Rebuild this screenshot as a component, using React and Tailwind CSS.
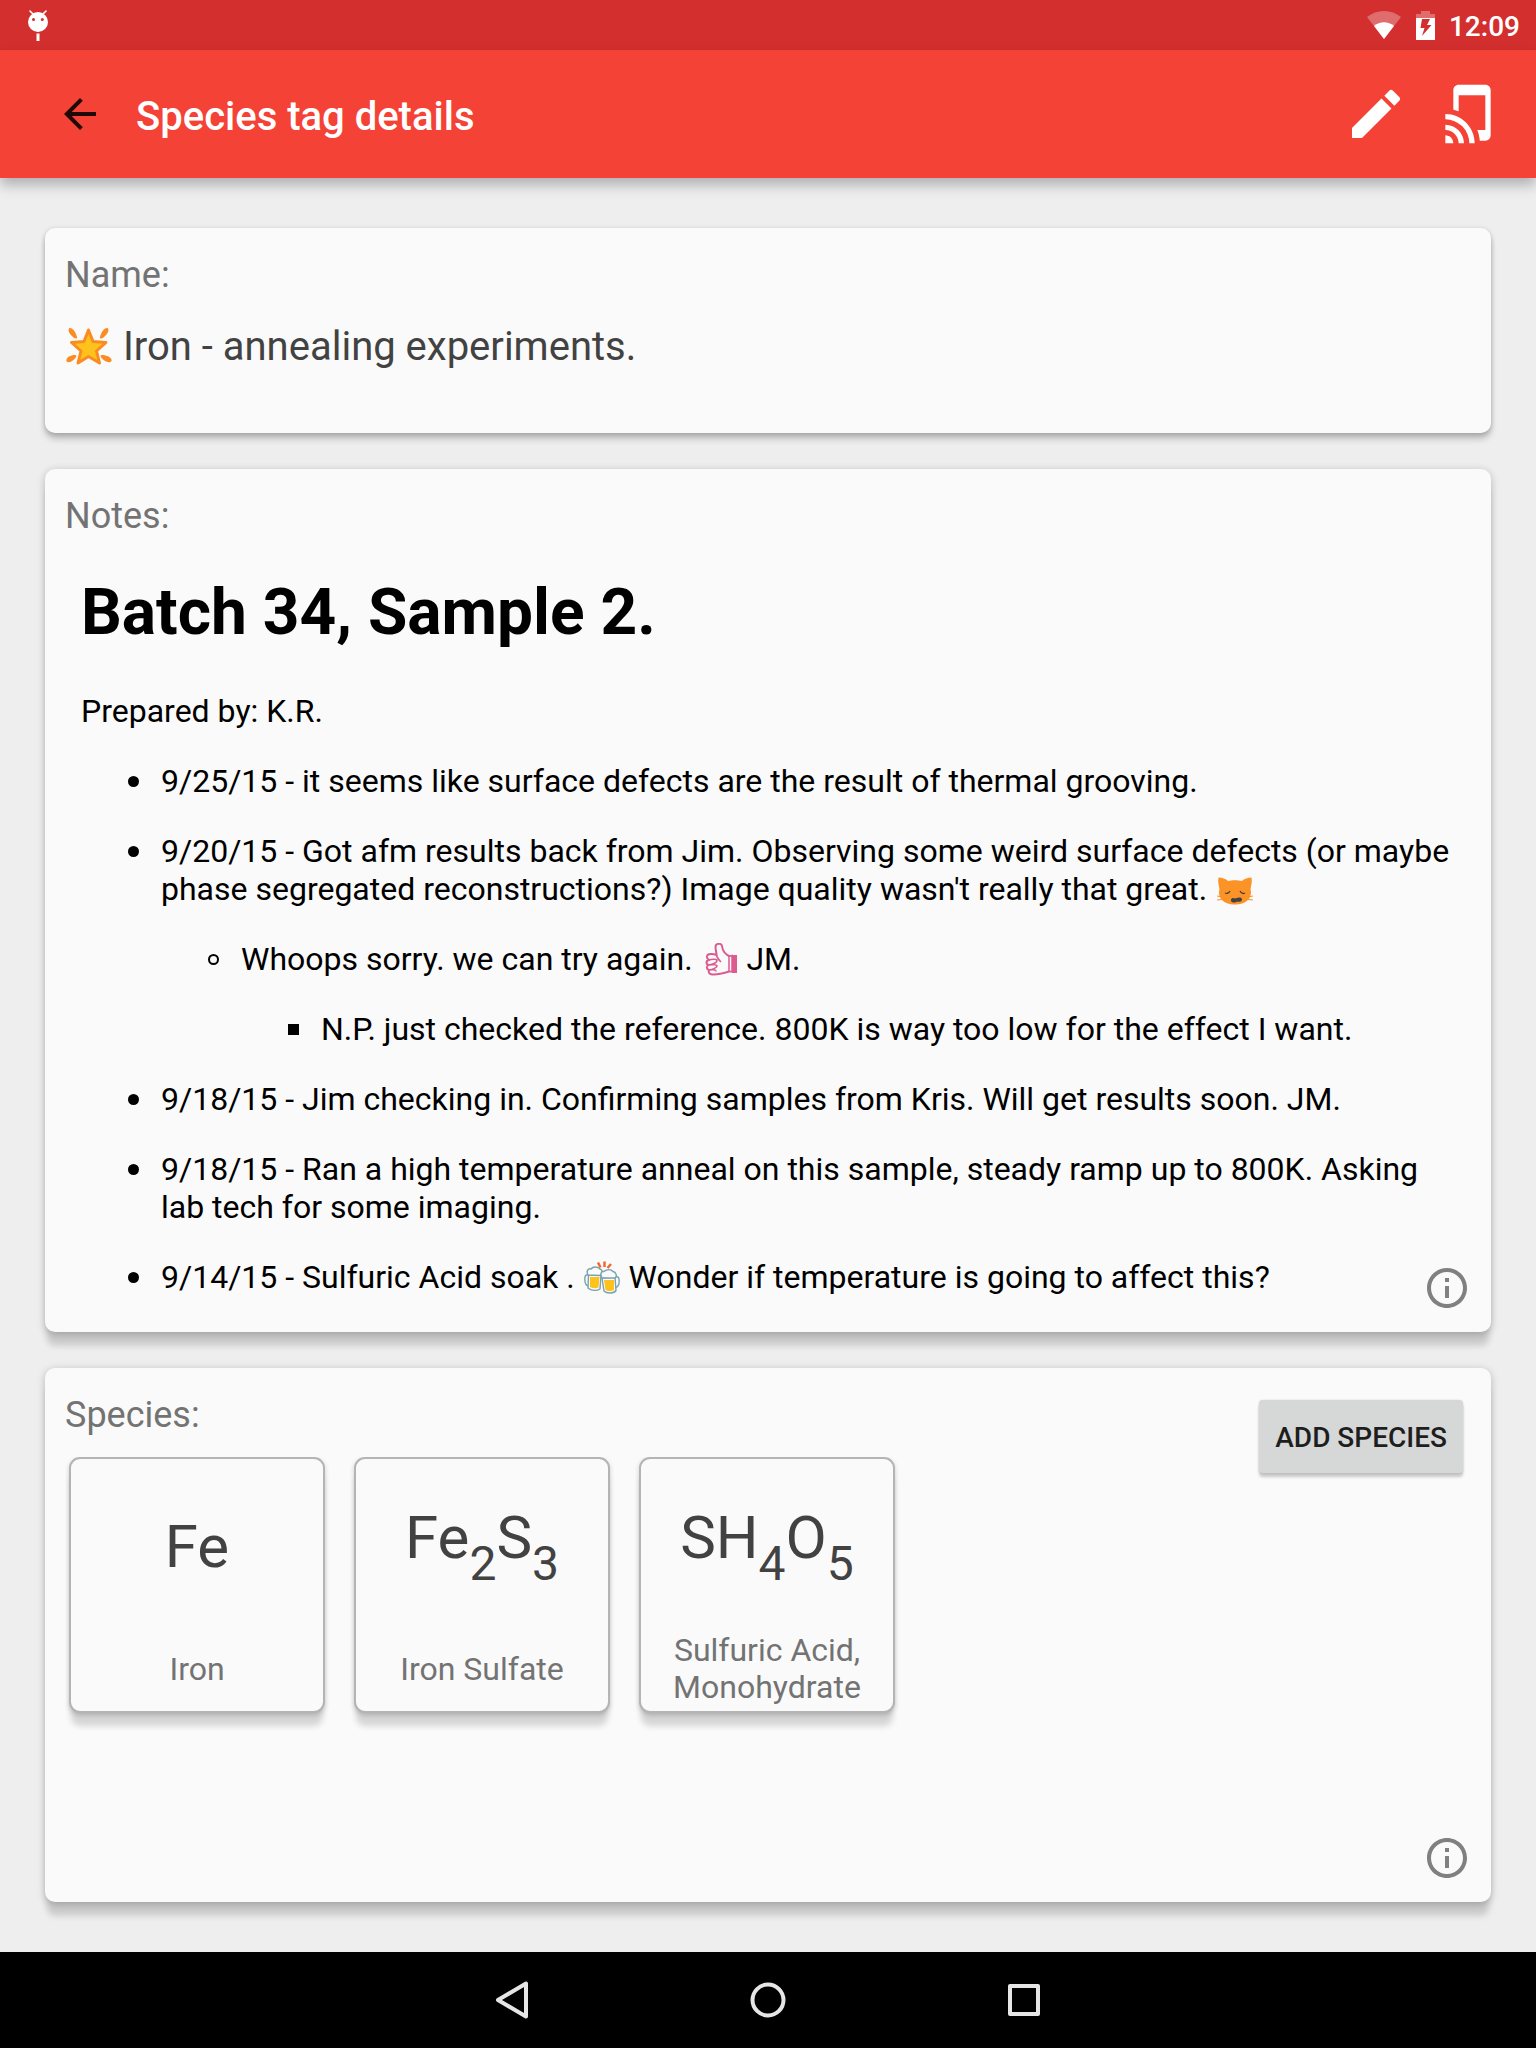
import { MdArrowBack, MdEdit, MdInfoOutline, MdTapAndPlay } from "react-icons/md";

const species = [
  { formula: ["Fe"], name: "Iron" },
  { formula: ["Fe", 2, "S", 3], name: "Iron Sulfate" },
  { formula: ["SH", 4, "O", 5], name: "Sulfuric Acid, Monohydrate" },
];

// bullets hang a bit further left than native list markers
const bullet = "before:inline-block before:size-[11px] before:-ml-[33px] before:mr-[22px] before:align-[5px]";
const disc = `${bullet} before:rounded-full before:bg-black`;
const circle = `${bullet} before:rounded-full before:border-2 before:border-black`;
const square = `${bullet} before:bg-black`;

function StarEmoji() {
  return (
    <svg viewBox="0 0 46 38" className="inline-block w-[46px] h-[38px] ml-px mr-px align-[-5px]" role="img" aria-label="glowing star">
      <g fill="#fb8c23">
        <path d="M3 1.500C5 0 9 3 11 10C11.500 12 9 12 7.500 10.500C4 7.500 1.500 4 3 1.500Z" />
        <path d="M42 1.500C40 0 36 3 34 10C33.500 12 36 12 37.500 10.500C41 7.500 43.500 4 42 1.500Z" />
        <path d="M.5 34C-.5 31 4 28 9 28C11 28 10.500 30 9 31.500C6 34.500 2 37 .5 34Z" />
        <path d="M45.500 34C46.500 31 41 28 36 28C34 28 34.500 30 36 31.500C39 34.500 44 37 45.500 34Z" />
      </g>
      <path d="M22.500 3L27 14.500L40 15.500L30.500 24L33.500 36L22.500 29.500L12 36L15 24L5.500 15.500L18 14.500Z" fill="#fdc21c" stroke="#fb8c23" strokeWidth="3" strokeLinejoin="round" />
    </svg>
  );
}

function CatEmoji() {
  return (
    <svg viewBox="0 0 36 28" className="inline-block w-9 h-7 ml-0.5 align-[-5px]" role="img" aria-label="crying cat">
      <path d="M1.500 .5C5 .5 9 2 11 4C15 3 21 3 25 4C27 2 31 .5 34.500 .5C35.500 5 34 9 33.500 12C36 22 28 27.500 18 27.500S0 22 2.500 12C2 9 .5 5 1.500 .5Z" fill="#fb9327" />
      <path d="M0 19L5 20M0 23L5 22.500M36 19L31 20M36 23L31 22.500" stroke="#fb9327" strokeWidth="1.200" />
      <path d="M8 16C10 17 12 16 13 14M28 16C26 17 24 16 23 14" stroke="#424242" strokeWidth="1.300" fill="none" />
      <path d="M14 22.500C15 20.500 17 21 18.500 21.500C21 20 25 20 25 22.500C25 25 22 25 20 24.500C18 26 13 26 14 22.500Z" fill="#424242" />
    </svg>
  );
}

function ThumbEmoji() {
  return (
    <svg viewBox="0 0 33 33" className="inline-block w-[33px] h-[33px] ml-1 mr-px align-[-6px]" role="img" aria-label="thumbs up">
      <path d="M26 14C21 12 17.500 9 17 3C16.500 0 10.500 0 10.500 4C10.500 7 11.500 9 11.500 12C8 10.500 2.500 10.500 2 13C1.500 15 2.500 16 4 17C1 17.500 .5 21 3.500 22C1 23.500 1.500 26.500 4 27C3 30 5 32 9 31.500C14 31.500 19 30 26 28" fill="#fafafa" stroke="#dc5c92" strokeWidth="2" strokeLinejoin="round" />
      <path d="M4 17C7 16 12 16 12 17.500S9 21 3.500 22C8 21.500 12 21.500 12 23S8 26.500 4 27C8 26.500 11 26.500 11 28.500M11.500 12C12 15 14 17 16 19" fill="none" stroke="#dc5c92" strokeWidth="1.600" />
      <path d="M24 13.500L27 12.500V29L24 28Z" fill="#fafafa" stroke="#dc5c92" strokeWidth="1.500" />
      <path d="M27 12H32V30H27Z" fill="#dc5c92" />
    </svg>
  );
}

function BeersEmoji() {
  return (
    <svg viewBox="0 0 36 33" className="inline-block w-9 h-[33px] mx-px align-[-6px]" role="img" aria-label="clinking beer mugs">
      <path d="M14 1.500L16.500 6.500M20.500 .5V6M27 3L23.500 7" stroke="#f4672f" strokeWidth="2.500" />
      <g fill="#fafafa" stroke="#78a2ae" strokeWidth="1.400" strokeLinejoin="round">
        <path d="M5 14C1.500 13 .8 15 .8 18S1.500 25 5 25M31 16C34.500 15 35.200 17 35.200 20S34 26.500 31 26.500" />
        <path d="M4.500 14L4 27C7 30 13 30 16 28L17 14Z" />
        <path d="M4 14C2 10 4 7 7 8C9 5 14 5.500 16 8C19 9 19 13 16 14.500Z" />
        <path d="M18 17L20 30C23 33 30 32.500 32 29.500L31 16Z" />
        <path d="M18 17C16 13 17 10 20 10.500C23 8 27 8 29 10.500C32 11 33.500 15 31 17Z" />
      </g>
      <path d="M6 16H15.500L14.500 26.500C12 27.500 9 27.500 6 26Z" fill="#fdc21c" />
      <path d="M20 19H30L30 29C27 30.500 24 30.500 21.500 29Z" fill="#fdc21c" />
    </svg>
  );
}

function StatusBar() {
  return (
    <div className="h-[50px] bg-[#d32f2f] text-white flex items-center justify-between pl-7 pr-4">
      <svg viewBox="0 0 20 31" className="w-5 h-[31px]">
        <path d="M2 1L5 4M18 1L15 4" stroke="white" strokeWidth="1.600" strokeLinecap="round" />
        <circle cx="10" cy="12" r="10" fill="white" />
        <circle cx="5.500" cy="9.500" r="1.500" fill="#d32f2f" />
        <circle cx="14.300" cy="9.500" r="1.500" fill="#d32f2f" />
        <path d="M8.500 23.500H11.500V31H8.500Z" fill="white" />
      </svg>
      <div className="flex items-center">
        <svg viewBox="0 0 34 28" className="w-[34px] h-7 mr-[15px]">
          <path d="M0 6C10-2 24-2 34 6L17 28Z" fill="white" fillOpacity=".3" />
          <path d="M7 15C13 10 21 10 27 15L17 28Z" fill="white" />
        </svg>
        <svg viewBox="0 0 19 29" className="w-[19px] h-[29px] mr-[14px]">
          <path d="M5 0H14V3H19V7H0V3H5Z" fill="white" fillOpacity=".3" />
          <path d="M0 7H19V29H0Z" fill="white" />
          <path d="M6 8H14L11 14H15.500L6 25L8.500 17H4.500Z" fill="#d32f2f" />
        </svg>
        <span className="text-[28px] leading-8 pt-[3px] font-medium">12:09</span>
      </div>
    </div>
  );
}

function Toolbar() {
  return (
    <header className="h-32 bg-[#f44336] flex items-center pl-14 pr-8 shadow-[0_7px_12px_rgba(0,0,0,0.26)]">
      <button aria-label="Back" className="text-black/87">
        <MdArrowBack className="size-12" />
      </button>
      <h1 className="flex-1 ml-8 pt-1 text-[40px] leading-[47px] font-medium text-white">Species tag details</h1>
      <div className="flex gap-8 text-white">
        <button aria-label="Edit">
          <MdEdit className="size-16" />
        </button>
        <button aria-label="Write tag">
          <MdTapAndPlay className="size-16" />
        </button>
      </div>
    </header>
  );
}

function InfoButton({ label }) {
  return (
    <button aria-label={label} className="absolute right-5 bottom-5 text-[#808080]">
      <MdInfoOutline className="size-12" />
    </button>
  );
}

function Label({ children }) {
  return <h2 className="text-4xl leading-[42px] text-[#737373]">{children}</h2>;
}

function Notes() {
  return (
    <div className="px-4 text-[32px] leading-[38px] text-black">
      <h3 className="mt-[38px] text-[64px] leading-[75px] font-bold">Batch 34, Sample 2.</h3>
      <p className="mt-[42px]">Prepared by: K.R.</p>
      <ul className="mt-8 pl-20 space-y-8">
        <li className={disc}>9/25/15 - it seems like surface defects are the result of thermal grooving.</li>
        <li className={disc}>
          9/20/15 - Got afm results back from Jim. Observing some weird surface defects (or maybe phase segregated
          reconstructions?) Image quality wasn't really that great. <CatEmoji />
          <ul className="mt-8 pl-20">
            <li className={circle}>
              Whoops sorry. we can try again. <ThumbEmoji /> JM.
              <ul className="mt-8 pl-20">
                <li className={square}>N.P. just checked the reference. 800K is way too low for the effect I want.</li>
              </ul>
            </li>
          </ul>
        </li>
        <li className={disc}>9/18/15 - Jim checking in. Confirming samples from Kris. Will get results soon. JM.</li>
        <li className={disc}>
          9/18/15 - Ran a high temperature anneal on this sample, steady ramp up to 800K. Asking lab tech for some imaging.
        </li>
        <li className={disc}>
          9/14/15 - Sulfuric Acid soak . <BeersEmoji /> Wonder if temperature is going to affect this?
        </li>
      </ul>
    </div>
  );
}

function SpeciesTile({ formula, name }) {
  return (
    <li className="size-64 shrink-0 rounded-[11px] border-2 border-[#b4b4b4] bg-[#fafafa] pt-1.5 text-center shadow-[0_15px_6px_-2px_rgba(0,0,0,0.15),0_2px_5px_rgba(0,0,0,0.18)]">
      <div className="h-[164px] flex items-center justify-center">
        <p className="text-[60px] leading-[70px] text-[#424242]">
          {formula.map((part, i) =>
            typeof part === "number" ? (
              <sub key={i} className="static align-[-22px] text-5xl leading-[56px]">{part}</sub>
            ) : (
              <span key={i}>{part}</span>
            )
          )}
        </p>
      </div>
      <div className="h-20 px-4 flex items-center justify-center">
        <p className="text-[32px] leading-[37px] text-[#737373]">{name}</p>
      </div>
    </li>
  );
}

function NavBar() {
  return (
    <nav className="h-24 bg-black flex justify-center">
      <button aria-label="Back" className="w-64 flex items-center justify-center">
        <svg viewBox="0 0 40 40" className="size-10" fill="none" stroke="#e6e6e6" strokeWidth="4" strokeLinejoin="round">
          <path d="M6 20L34 3.500V36.500Z" />
        </svg>
      </button>
      <button aria-label="Home" className="w-64 flex items-center justify-center">
        <svg viewBox="0 0 40 40" className="size-10" fill="none" stroke="#e6e6e6" strokeWidth="4">
          <circle cx="20" cy="20" r="15.500" />
        </svg>
      </button>
      <button aria-label="Recent apps" className="w-64 flex items-center justify-center">
        <svg viewBox="0 0 40 40" className="size-10" fill="none" stroke="#e6e6e6" strokeWidth="4" strokeLinejoin="round">
          <path d="M6 6H34V34H6Z" />
        </svg>
      </button>
    </nav>
  );
}

export default function App() {
  return (
    <div className="min-h-screen flex flex-col bg-[#eeeeee] font-[Roboto,sans-serif]">
      <StatusBar />
      <Toolbar />

      <main className="flex-1 flex flex-col gap-9 px-[45px] py-[50px]">
        <section className="rounded-[10px] bg-[#fafafa] px-5 pt-[26px] pb-[63px] shadow-[0_6px_6px_rgba(0,0,0,0.2),0_1px_5px_rgba(0,0,0,0.18)]">
          <Label>Name:</Label>
          <p className="mt-[27px] text-[40px] leading-[47px] text-[#424242]">
            <StarEmoji /> Iron - annealing experiments.
          </p>
        </section>

        <section className="relative rounded-[10px] bg-[#fafafa] px-5 pt-[26px] pb-9 shadow-[0_16px_6px_-2px_rgba(0,0,0,0.14),0_2px_8px_rgba(0,0,0,0.24)]">
          <Label>Notes:</Label>
          <Notes />
          <InfoButton label="About notes" />
        </section>

        <section className="relative flex-1 rounded-[10px] bg-[#fafafa] px-5 pt-[26px] shadow-[0_16px_6px_-2px_rgba(0,0,0,0.14),0_2px_8px_rgba(0,0,0,0.24)]">
          <div className="flex items-start">
            <div className="flex-1 min-w-0">
              <Label>Species:</Label>
              <ul className="mt-[21px] flex gap-[29px] overflow-hidden pl-1 pb-6">
                {species.map((s) => (
                  <SpeciesTile key={s.name} formula={s.formula} name={s.name} />
                ))}
              </ul>
            </div>
            <button className="mt-1.5 mr-2 h-[73px] px-4 pt-0.5 rounded-[4px] bg-[#d6d8d7] text-[28px] leading-8 font-medium text-[#1e1e1e] shadow-[0_4px_3px_rgba(0,0,0,0.2),0_0_2px_rgba(0,0,0,0.15)]">
              ADD SPECIES
            </button>
          </div>
          <InfoButton label="About species" />
        </section>
      </main>

      <NavBar />
    </div>
  );
}
